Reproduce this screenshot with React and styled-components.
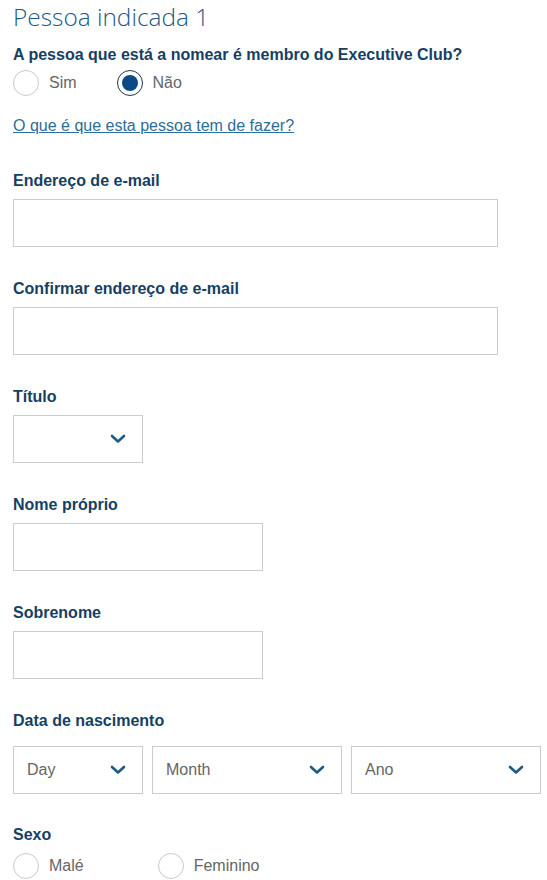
import React from "react";
import styled, { createGlobalStyle } from "styled-components";

const GlobalStyle = createGlobalStyle`
  body {
    margin: 0;
    background: #ffffff;
    font-family: "Liberation Sans", Arial, sans-serif;
  }
`;

const Chevron = () => (
  <svg width="16" height="10" viewBox="0 0 16 10">
    <path
      d="M2 2 L8 7.5 L14 2"
      fill="none"
      stroke="#1d5a86"
      strokeWidth="2.6"
      strokeLinecap="round"
      strokeLinejoin="round"
    />
  </svg>
);

const App = () => {
  return (
    <>
      <GlobalStyle />
      <Page>
        <Title>Pessoa indicada 1</Title>
        <Question>A pessoa que está a nomear é membro do Executive Club?</Question>
        <RadioRow top={6}>
          <Option spacing={40}>
            <Circle />
            <OptionText>Sim</OptionText>
          </Option>
          <Option>
            <Circle checked />
            <OptionText>Não</OptionText>
          </Option>
        </RadioRow>
        <HelpLink href="#">O que é que esta pessoa tem de fazer?</HelpLink>

        <Field first>
          <Label>Endereço de e-mail</Label>
          <Input width={485} />
        </Field>
        <Field>
          <Label>Confirmar endereço de e-mail</Label>
          <Input width={485} />
        </Field>
        <Field>
          <Label>Título</Label>
          <Select width={130}>
            <span />
            <Chevron />
          </Select>
        </Field>
        <Field>
          <Label>Nome próprio</Label>
          <Input width={250} />
        </Field>
        <Field>
          <Label>Sobrenome</Label>
          <Input width={250} />
        </Field>
        <Field>
          <Label gap={16}>Data de nascimento</Label>
          <DateRow>
            <Select width={130}>
              <Placeholder>Day</Placeholder>
              <Chevron />
            </Select>
            <Select width={190}>
              <Placeholder>Month</Placeholder>
              <Chevron />
            </Select>
            <Select width={190}>
              <Placeholder>Ano</Placeholder>
              <Chevron />
            </Select>
          </DateRow>
        </Field>
        <Field last>
          <Label>Sexo</Label>
          <RadioRow>
            <Option spacing={74}>
              <Circle />
              <OptionText>Malé</OptionText>
            </Option>
            <Option>
              <Circle />
              <OptionText>Feminino</OptionText>
            </Option>
          </RadioRow>
        </Field>
      </Page>
    </>
  );
};

const Page = styled.div`
  padding: 2px 0 0 13px;
  display: flex;
  flex-direction: column;
  align-items: flex-start;
`;

const Title = styled.h1`
  margin: 0;
  font-family: "Open Sans", sans-serif;
  font-weight: 300;
  font-size: 24.4px;
  line-height: 30px;
  color: #1b5a88;
`;

const Question = styled.p`
  margin: 14px 0 0;
  font-size: 16px;
  line-height: 18px;
  font-weight: bold;
  color: #163f63;
`;

const RadioRow = styled.div`
  display: flex;
  align-items: center;
  margin-top: ${(p) => p.top || 0}px;
`;

const Option = styled.label`
  display: flex;
  align-items: center;
  gap: 10px;
  margin-right: ${(p) => p.spacing || 0}px;
`;

const Circle = styled.span`
  width: 26px;
  height: 26px;
  box-sizing: border-box;
  border-radius: 50%;
  border: 1px solid ${(p) => (p.checked ? "#1d3550" : "#c9c9c9")};
  display: flex;
  align-items: center;
  justify-content: center;
  &::after {
    content: "";
    display: ${(p) => (p.checked ? "block" : "none")};
    width: 16px;
    height: 16px;
    border-radius: 50%;
    background: #0b4a86;
  }
`;

const OptionText = styled.span`
  font-size: 16px;
  color: #666666;
`;

const HelpLink = styled.a`
  margin-top: 21px;
  font-size: 16px;
  line-height: 18px;
  color: #2b6e98;
  text-decoration: underline;
`;

const Field = styled.div`
  display: flex;
  flex-direction: column;
  align-items: flex-start;
  margin-top: ${(p) => (p.first ? 37 : p.last ? 32 : 33)}px;
`;

const Label = styled.label`
  font-size: 16px;
  line-height: 18px;
  font-weight: bold;
  color: #163f63;
  margin-bottom: ${(p) => p.gap || 9}px;
`;

const Input = styled.div`
  width: ${(p) => p.width}px;
  height: 48px;
  box-sizing: border-box;
  border: 1px solid #cccccc;
  background: #ffffff;
`;

const Select = styled.div`
  width: ${(p) => p.width}px;
  height: 48px;
  box-sizing: border-box;
  border: 1px solid #cccccc;
  display: flex;
  align-items: center;
  justify-content: space-between;
  padding: 0 16px 0 13px;
`;

const Placeholder = styled.span`
  font-size: 16px;
  color: #666666;
`;

const DateRow = styled.div`
  display: flex;
  gap: 9px;
`;

export default App;
